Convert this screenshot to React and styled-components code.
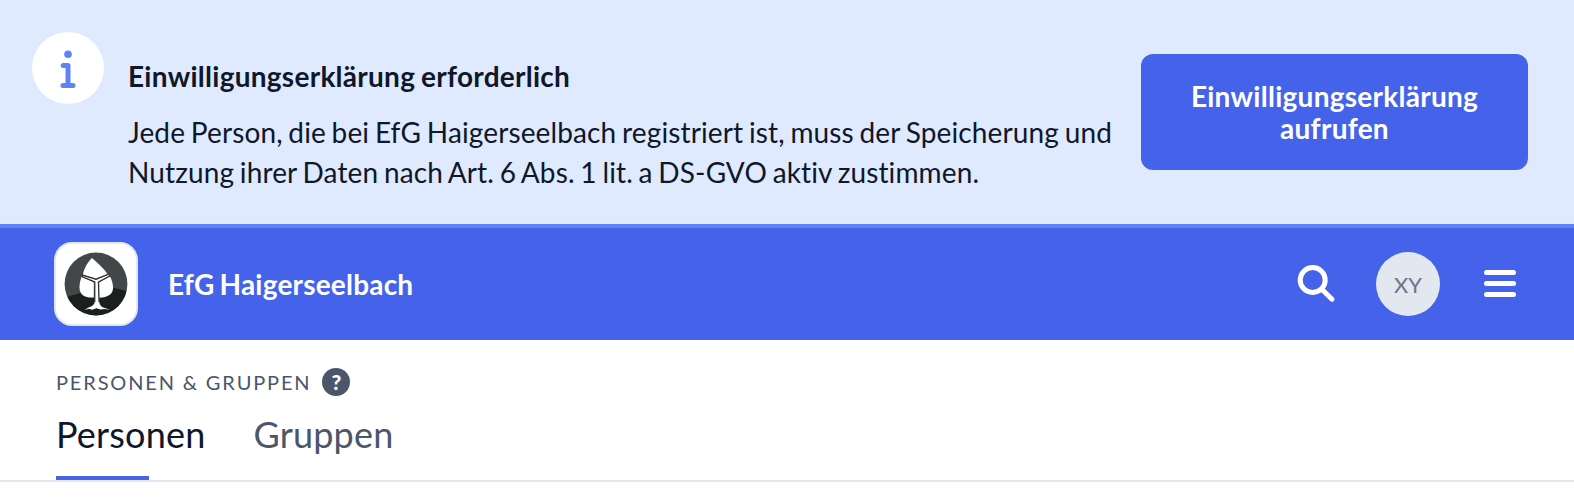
import React from "react";
import styled, { createGlobalStyle } from "styled-components";

const GlobalStyle = createGlobalStyle`
  *, *::before, *::after { box-sizing: border-box; }
  body {
    margin: 0;
    background: #fff;
    color: #0f172a;
    font-family: Lato, "Liberation Sans", sans-serif;
    font-size: 28px;
    font-variant-ligatures: none;
  }
  h1, h2, p { margin: 0; }
  button { font: inherit; border: 0; padding: 0; background: none; color: inherit; }
  svg { display: block; }
`;

const Banner = styled.section`
  display: flex;
  align-items: flex-start;
  height: 228px;
  padding: 32px 46px 0 32px;
  background: #e0eaff;
  border-bottom: 4px solid #5c84f6;
`;

const InfoBadge = styled.div`
  display: flex;
  flex: none;
  width: 72px;
  height: 72px;
  margin-right: 24px;
  border-radius: 50%;
  background: #fff;
`;

const BannerText = styled.div`
  flex: 1;
  padding-top: 24px;
  white-space: nowrap;
`;

const BannerTitle = styled.h2`
  margin-bottom: 16px;
  font-size: 28px;
  font-weight: 700;
  letter-spacing: 0.27px;
  word-spacing: -1.2px;
  line-height: 40px;
`;

const BannerBody = styled.p`
  letter-spacing: 0.13px;
  word-spacing: -1.6px;
  line-height: 40px;
`;

const ConsentButton = styled.button`
  flex: none;
  width: 387px;
  height: 116px;
  margin-top: 22px;
  border-radius: 12px;
  background: #4563ea;
  color: #fff;
  font-weight: 700;
  letter-spacing: 0.27px;
  line-height: 32px;
`;

const NavBar = styled.header`
  display: flex;
  align-items: center;
  height: 112px;
  padding: 0 54px;
  background: #4563ea;
  color: #fff;
`;

const LogoTile = styled.div`
  width: 84px;
  height: 84px;
  margin-right: 30px;
  border: 2px solid #e2e8f0;
  border-radius: 18px;
  background: #fff;
`;

const SiteName = styled.h1`
  flex: 1;
  font-size: 28px;
  font-weight: 700;
  letter-spacing: 0.2px;
  word-spacing: -2px;
  line-height: 40px;
`;

const IconButton = styled.button`
  flex: none;
  width: 40px;
  height: 40px;
`;

const Avatar = styled.div`
  width: 64px;
  height: 64px;
  margin: 0 40px;
  border-radius: 50%;
  background: #e3e7ef;
  color: #6b7589;
  font-size: 22px;
  line-height: 66px;
  text-align: center;
`;

const SectionHead = styled.div`
  display: flex;
  align-items: center;
  gap: 11px;
  height: 83px;
  padding-left: 56px;
  color: #4b566b;
`;

const SectionLabel = styled.span`
  padding-top: 1px;
  font-size: 20px;
  letter-spacing: 1.85px;
  line-height: 28px;
  text-transform: uppercase;
`;

const HelpBadge = styled.span`
  width: 28px;
  height: 28px;
  border-radius: 50%;
  background: #4b566b;
  color: #fff;
  font-size: 21px;
  font-weight: 900;
  line-height: 27px;
  text-align: center;
`;

const Tabs = styled.nav`
  display: flex;
  gap: 48px;
  height: 59px;
  padding-left: 56px;
  border-bottom: 2px solid #e2e8f0;
`;

const Tab = styled.a`
  height: 57px;
  color: ${(p) => (p.$active ? "#0f172a" : "#4b566b")};
  font-size: 36px;
  letter-spacing: 0.2px;
  line-height: 22px;

  &::after {
    content: "";
    display: ${(p) => (p.$active ? "block" : "none")};
    width: 93px;
    height: 4px;
    margin-top: 31px;
    background: #4563ea;
  }
`;

function InfoIcon() {
  return (
    <svg width="72" height="72" viewBox="0 0 72 72" fill="none" stroke="#5c84f6" strokeWidth="5" strokeLinecap="round" strokeLinejoin="round">
      <circle cx="36" cy="22.2" r="3.8" fill="#5c84f6" stroke="none" />
      <path d="M31.2 33.5H36V53.5M31 53.5H41" />
    </svg>
  );
}

function TreeLogo() {
  return (
    <svg width="80" height="80" viewBox="0 0 80 80">
      <defs>
        <clipPath id="disc"><circle cx="40" cy="40" r="31.4" /></clipPath>
      </defs>
      <g clipPath="url(#disc)">
        <rect width="80" height="80" fill="#424849" />
        <path d="M8 54C17 51 21 50 28 48C40 48 46 45 54 44C62 44 67 46 73 48V80H8Z" fill="#1b201f" />
      </g>
      <path d="M36 14C42 19 48 25 51.5 30L40 34.5L27 30.5C28 24 32 18 36 14Z" fill="#fff" />
      <path d="M25.8 32.5L37.8 38.5V53.5C29 54 23.5 51 23.5 43.5C23.5 39 24.5 35.5 25.8 32.5Z" fill="#fff" />
      <path d="M53.8 32.2C56 36 57 39.5 57 44C57 50 52 53.5 43.2 53.7V38.5Z" fill="#fff" />
      <path d="M27 31.7L40 36.1L52.4 30.8L52.8 32L42.2 37.7L43.2 58Q44 62.5 48 63.7L54 65.8L48.5 64.9L44.5 65.5L40.5 64.3L36 65.7L33 64.8L28.3 66L33 63.3Q38 62 38.8 58L39 37.8L27 33Z" fill="#fff" />
      <path d="M26 31L40 35.2L53 30M26 32.6L38.8 38V58M54 32L42.4 38L43 58" fill="none" stroke="#303635" strokeWidth="1.2" />
    </svg>
  );
}

function SearchIcon() {
  return (
    <svg width="40" height="40" viewBox="0 0 40 40" fill="none" stroke="#fff" strokeWidth="5" strokeLinecap="round">
      <circle cx="16.7" cy="16" r="12.5" />
      <path d="M26 25.5L36 35.2" />
    </svg>
  );
}

function MenuIcon() {
  return (
    <svg width="40" height="40" viewBox="0 0 40 40" stroke="#fff" strokeWidth="5" strokeLinecap="round">
      <path d="M6.5 8.5H33.5M6.5 19.5H33.5M6.5 30.5H33.5" />
    </svg>
  );
}

export default function App() {
  return (
    <>
      <GlobalStyle />
      <Banner>
        <InfoBadge><InfoIcon /></InfoBadge>
        <BannerText>
          <BannerTitle>Einwilligungserklärung erforderlich</BannerTitle>
          <BannerBody>
            Jede Person, die bei EfG Haigerseelbach registriert ist, muss der Speicherung und
            <br />
            Nutzung ihrer Daten nach Art. 6 Abs. 1 lit. a DS-GVO aktiv zustimmen.
          </BannerBody>
        </BannerText>
        <ConsentButton>Einwilligungserklärung<br />aufrufen</ConsentButton>
      </Banner>
      <NavBar>
        <LogoTile><TreeLogo /></LogoTile>
        <SiteName>EfG Haigerseelbach</SiteName>
        <IconButton aria-label="Suche"><SearchIcon /></IconButton>
        <Avatar>XY</Avatar>
        <IconButton aria-label="Menü"><MenuIcon /></IconButton>
      </NavBar>
      <main>
        <SectionHead>
          <SectionLabel>Personen &amp; Gruppen</SectionLabel>
          <HelpBadge>?</HelpBadge>
        </SectionHead>
        <Tabs>
          <Tab $active>Personen</Tab>
          <Tab>Gruppen</Tab>
        </Tabs>
      </main>
    </>
  );
}
